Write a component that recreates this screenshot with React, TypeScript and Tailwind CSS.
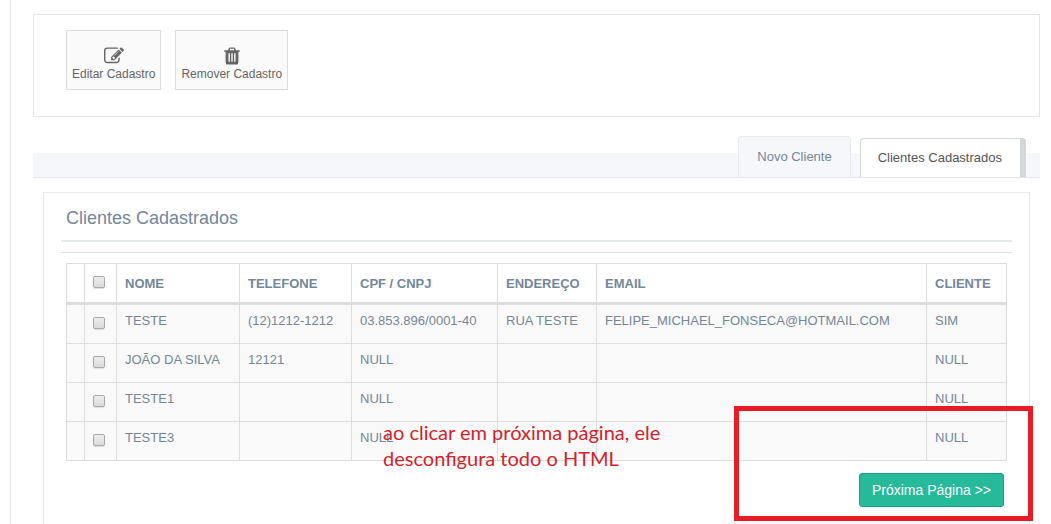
import { useState } from "react";

type Customer = {
  name: string;
  phone: string;
  document: string;
  address: string;
  email: string;
  client: string;
};

const customers: Customer[] = [
  {
    name: "TESTE",
    phone: "(12)1212-1212",
    document: "03.853.896/0001-40",
    address: "RUA TESTE",
    email: "FELIPE_MICHAEL_FONSECA@HOTMAIL.COM",
    client: "SIM",
  },
  { name: "JOÃO DA SILVA", phone: "12121", document: "NULL", address: "", email: "", client: "NULL" },
  { name: "TESTE1", phone: "", document: "NULL", address: "", email: "", client: "NULL" },
  { name: "TESTE3", phone: "", document: "NULL", address: "", email: "", client: "NULL" },
];

const columns = ["NOME", "TELEFONE", "CPF / CNPJ", "ENDEREÇO", "EMAIL", "CLIENTE"];

function EditIcon() {
  return (
    <svg viewBox="0 0 1792 1792" className="size-5 fill-current" aria-hidden="true">
      <path d="M888 1184l116-116-152-152-116 116v56h96v96h56zm440-720q-16-16-33 1l-350 350q-17 17-1 33t33-1l350-350q17-17 1-33zm80 594v190q0 119-84.5 203.5t-203.5 84.5h-832q-119 0-203.5-84.5t-84.5-203.5v-832q0-119 84.5-203.5t203.5-84.5h832q63 0 117 25 15 7 18 23 3 17-9 29l-49 49q-14 14-32 8-23-6-45-6h-832q-66 0-113 47t-47 113v832q0 66 47 113t113 47h832q66 0 113-47t47-113v-126q0-13 9-22l64-64q15-15 35-7t20 29zm-96-738l288 288-672 672h-288v-288zm444 132l-92 92-288-288 92-92q28-28 68-28t68 28l152 152q28 28 28 68t-28 68z" />
    </svg>
  );
}

function TrashIcon() {
  return (
    <svg viewBox="0 0 1792 1792" className="size-5 fill-current" aria-hidden="true">
      <path d="M704 1376v-704q0-14-9-23t-23-9h-64q-14 0-23 9t-9 23v704q0 14 9 23t23 9h64q14 0 23-9t9-23zm256 0v-704q0-14-9-23t-23-9h-64q-14 0-23 9t-9 23v704q0 14 9 23t23 9h64q14 0 23-9t9-23zm256 0v-704q0-14-9-23t-23-9h-64q-14 0-23 9t-9 23v704q0 14 9 23t23 9h64q14 0 23-9t9-23zm-544-992h448l-48-117q-7-9-17-11h-317q-10 2-17 11zm928 32v64q0 14-9 23t-23 9h-96v948q0 83-47 143.5t-113 60.5h-832q-66 0-113-58.5t-47-141.5v-952h-96q-14 0-23-9t-9-23v-64q0-14 9-23t23-9h309l70-167q15-37 54-63t79-26h320q40 0 79 26t54 63l70 167h309q14 0 23 9t9 23z" />
    </svg>
  );
}

function ActionButton({ icon, label }: { icon: React.ReactNode; label: string }) {
  return (
    <button
      type="button"
      className="flex h-[60px] flex-col items-center border border-[#ddd] bg-[#fafafa] px-[5px] pt-[15px] text-xs text-[#666]"
    >
      {icon}
      <span className="leading-4">{label}</span>
    </button>
  );
}

function Checkbox({ label, checked, onChange }: { label: string; checked: boolean; onChange: () => void }) {
  return (
    <input
      type="checkbox"
      aria-label={label}
      checked={checked}
      onChange={onChange}
      className="block size-3 appearance-none rounded-[2px] border border-[#a9a9a9] bg-linear-to-b from-[#ededed] to-[#dadada] shadow-[0_1px_1px_#ddd] checked:bg-[#73879c]"
    />
  );
}

function CustomersTable() {
  const [selected, setSelected] = useState<number[]>([]);
  const allSelected = selected.length === customers.length;

  const toggle = (index: number) =>
    setSelected((prev) => (prev.includes(index) ? prev.filter((i) => i !== index) : [...prev, index]));

  const toggleAll = () => setSelected(allSelected ? [] : customers.map((_, i) => i));

  return (
    <table className="w-full table-fixed border-separate border-spacing-0 border-t border-l border-[#ddd] text-left text-[13px] leading-4">
      <colgroup>
        <col className="w-[18px]" />
        <col className="w-8" />
        <col className="w-[123px]" />
        <col className="w-28" />
        <col className="w-[146px]" />
        <col className="w-[99px]" />
        <col />
        <col className="w-20" />
      </colgroup>
      <thead>
        <tr className="h-[41px] align-top *:border-r *:border-b-[3px] *:border-[#ddd] *:px-2 *:pt-3">
          <td />
          <th>
            <Checkbox label="Selecionar todos" checked={allSelected} onChange={toggleAll} />
          </th>
          {columns.map((column) => (
            <th key={column} className="font-bold">
              {column}
            </th>
          ))}
        </tr>
      </thead>
      <tbody>
        {customers.map((customer, index) => (
          <tr
            key={customer.name}
            className="h-[39px] bg-[#f9f9f9] align-top *:border-r *:border-b *:border-[#ddd] *:px-2 *:pt-2"
          >
            <td />
            <td>
              <div className="pt-1">
                <Checkbox
                  label={`Selecionar ${customer.name}`}
                  checked={selected.includes(index)}
                  onChange={() => toggle(index)}
                />
              </div>
            </td>
            <td>{customer.name}</td>
            <td>{customer.phone}</td>
            <td>{customer.document}</td>
            <td>{customer.address}</td>
            <td>{customer.email}</td>
            <td>{customer.client}</td>
          </tr>
        ))}
      </tbody>
    </table>
  );
}

export default function App() {
  return (
    <div className="min-h-screen bg-white pl-[10px] font-['Liberation_Sans',Arial,sans-serif] text-[#73879c]">
      <main className="flex min-h-screen flex-col border-l border-[#e5e5e5] pt-[14px] pr-[11px] pl-[22px]">
        <section className="flex gap-[14px] border border-[#e6e6e6] px-8 pt-[15px] pb-[26px]">
          <ActionButton icon={<EditIcon />} label="Editar Cadastro" />
          <ActionButton icon={<TrashIcon />} label="Remover Cadastro" />
        </section>

        {/* tabs are taller than the bar and stick out above it */}
        <nav className="mt-9 flex h-[25px] items-end justify-end gap-[9px] border-b border-[#e4e6ea] bg-[#f5f7fa] pr-[14px] text-[13px] leading-5">
          <a
            href="#novo"
            className="h-[41px] shrink-0 rounded-t border border-b-0 border-[#e6e9ed] bg-[#f5f7fa] px-[18px] pt-[10px]"
          >
            Novo Cliente
          </a>
          <a
            href="#cadastrados"
            className="h-[39px] shrink-0 rounded-t border border-r-[6px] border-b-0 border-[#d3d6da] bg-white pr-[18px] pl-[17px] pt-[9px] text-[#555]"
          >
            Clientes Cadastrados
          </a>
        </nav>

        <section className="relative mx-[10px] mt-[14px] flex-1 border border-b-0 border-[#e6e9ed] px-[17px] pt-3 pb-4">
          <h2 className="border-b-2 border-[#e6e9e9] pb-[9px] pl-[5px] text-lg leading-[26px]">
            Clientes Cadastrados
          </h2>
          <hr className="mt-[10px] border-[#ddd]" />
          <div className="px-[5px] pt-[10px]">
            <CustomersTable />
          </div>
          <div className="mt-3 flex justify-end pr-2">
            <button
              type="button"
              className="h-[34px] rounded-[3px] border border-[#169f85] bg-[#26b99a] px-3 text-sm text-white"
            >
              Próxima Página &gt;&gt;
            </button>
          </div>

          <p className="pointer-events-none absolute top-[226px] left-[339px] w-[290px] font-[Lato,sans-serif] text-xl leading-[26px] text-[#d2232a]">
            ao clicar em próxima página, ele desconfigura todo o HTML
          </p>
          <div className="pointer-events-none absolute top-[213px] -right-1 h-[115px] w-[299px] border-5 border-[#e81c24]" />
        </section>
      </main>
    </div>
  );
}
